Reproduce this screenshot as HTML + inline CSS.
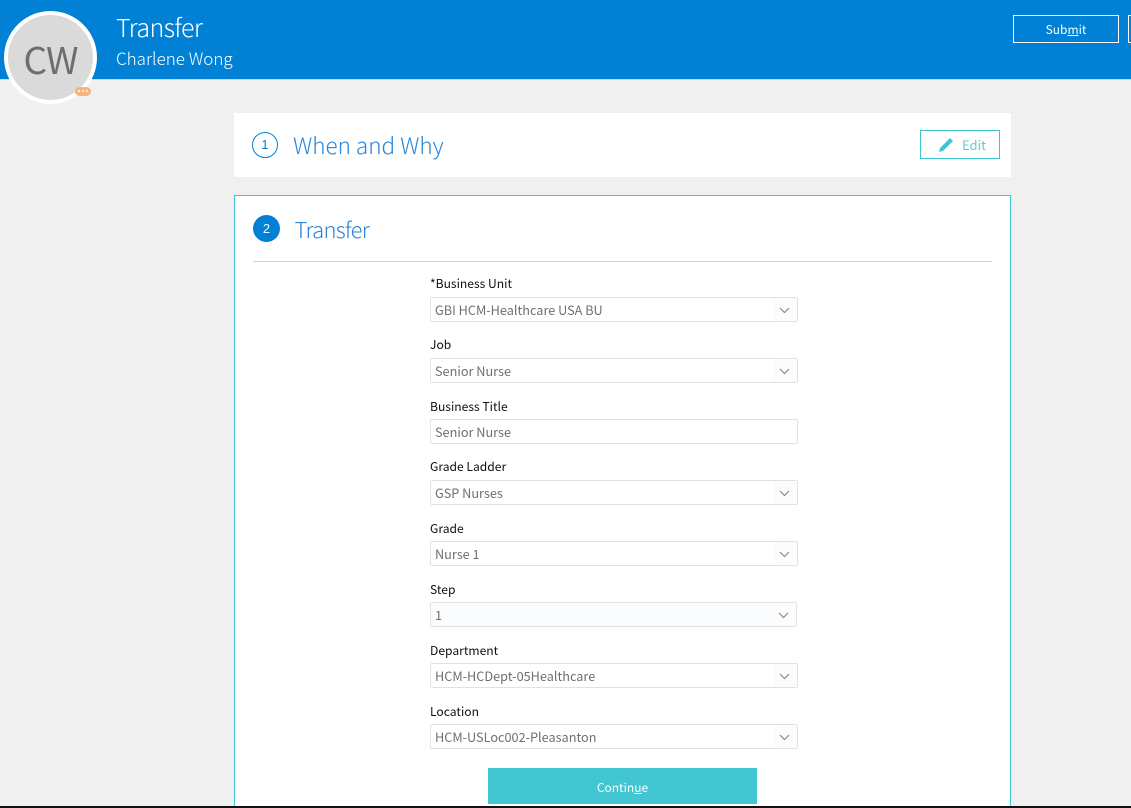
<!DOCTYPE html>
<html lang="en">
<head>
<meta charset="utf-8">
<title>Transfer</title>
<style>
*{box-sizing:border-box}
html,body{margin:0;padding:0;width:1131px;height:808px;overflow:hidden}
body{background:#f0f0f0;font-family:"Noto Sans CJK JP","Liberation Sans",sans-serif;}
#w{position:relative;width:1131px;height:808px;overflow:hidden}
.a{position:absolute;white-space:nowrap}
.lb{position:absolute;left:430px;font-size:12.1px;line-height:18px;color:#111;white-space:nowrap}
.f{position:absolute;left:430px;width:368px;height:25px;background:#fff;border:1px solid #dfe3e6;border-radius:2px;font-size:12.7px;line-height:24px;color:#6f6f6f;padding-left:4px;white-space:nowrap}
.f.s::after{content:"";position:absolute;right:0;top:0;bottom:0;width:23px;background:#fbfcfd}
.f svg{position:absolute;right:7px;top:9px;z-index:1}
</style>
</head>
<body>
<div id="w">
<div class="a" style="left:0;top:0;width:1131px;height:80px;background:#0081d6;border-bottom:1px solid #c5d9e8"></div>
<div class="a" style="left:4px;top:11px;width:93px;height:93px;border-radius:50%;background:#dadada;border:4px solid #fff"></div>
<div class="a" style="left:4px;top:36px;width:93px;text-align:center;font-size:37px;line-height:44px;color:#6e6e6e;font-weight:400;letter-spacing:-1px">CW</div>
<div class="a" style="left:75px;top:87px;width:16px;height:9px;border-radius:5px;background:#f9b47c"></div>
<div class="a" style="left:78px;top:90px;width:2px;height:2px;background:#fff;box-shadow:4px 0 0 #fff,8px 0 0 #fff;border-radius:50%"></div>
<div class="a" style="left:116px;top:9px;font-size:25px;line-height:36px;color:#fff;font-weight:300;letter-spacing:-.6px">Transfer</div>
<div class="a" style="left:116px;top:45px;font-size:17px;line-height:26px;color:#fff;font-weight:300">Charlene Wong</div>
<div class="a" style="left:1013px;top:15px;width:106px;height:28px;border:1px solid #fff;color:#fff;font-size:12px;line-height:27px;text-align:center">Sub<u>m</u>it</div>
<div class="a" style="left:1128px;top:15px;width:10px;height:28px;border:1px solid #fff"></div>

<div class="a" style="left:234px;top:113px;width:777px;height:64px;background:#fff"></div>
<div class="a" style="left:252px;top:132px;width:26px;height:26px;border:1px solid #0081d6;border-radius:50%;color:#0081d6;font-size:13px;line-height:24px;text-align:center;font-family:'Liberation Sans',sans-serif">1</div>
<div class="a" style="left:293px;top:128px;font-size:22.5px;line-height:34px;color:#2a86d8;font-weight:300">When and Why</div>
<div class="a" style="left:920px;top:130px;width:80px;height:29px;border:1px solid #40c6d2"></div>
<svg class="a" style="left:938px;top:137px" width="16" height="16" viewBox="0 0 16 16"><path d="M1 15 L2 11 L11 2 L12 1 L15 4 L14 5 L5 14 Z" fill="#40c6d2"/></svg>
<div class="a" style="left:962px;top:136px;font-size:13px;line-height:18px;color:#5ccdd7">Edit</div>

<div class="a" style="left:234px;top:195px;width:777px;height:620px;background:#fff;border:1px solid #40c6d2"></div>
<div class="a" style="left:253px;top:215px;width:27px;height:27px;border-radius:50%;background:#0081d6;color:#fff;font-size:13px;line-height:27px;text-align:center;font-family:'Liberation Sans',sans-serif">2</div>
<div class="a" style="left:294.5px;top:212px;font-size:22px;line-height:34px;color:#2a86d8;font-weight:300;letter-spacing:-.7px">Transfer</div>
<div class="a" style="left:253px;top:261px;width:739px;height:1px;background:#cfd4d6"></div>

<div class="lb" style="top:275px">*Business Unit</div>
<div class="f s" style="top:297px">GBI HCM-Healthcare USA BU<svg width="11" height="7" viewBox="0 0 11 7"><path d="M1 1 L5.5 5.5 L10 1" fill="none" stroke="#8b8b8b" stroke-width="1.2"/></svg></div>
<div class="lb" style="top:336px">Job</div>
<div class="f s" style="top:358px">Senior Nurse<svg width="11" height="7" viewBox="0 0 11 7"><path d="M1 1 L5.5 5.5 L10 1" fill="none" stroke="#8b8b8b" stroke-width="1.2"/></svg></div>
<div class="lb" style="top:398px">Business Title</div>
<div class="f" style="top:419px">Senior Nurse</div>
<div class="lb" style="top:458px">Grade Ladder</div>
<div class="f s" style="top:480px">GSP Nurses<svg width="11" height="7" viewBox="0 0 11 7"><path d="M1 1 L5.5 5.5 L10 1" fill="none" stroke="#8b8b8b" stroke-width="1.2"/></svg></div>
<div class="lb" style="top:520px">Grade</div>
<div class="f s" style="top:541px">Nurse 1<svg width="11" height="7" viewBox="0 0 11 7"><path d="M1 1 L5.5 5.5 L10 1" fill="none" stroke="#8b8b8b" stroke-width="1.2"/></svg></div>
<div class="lb" style="top:581px">Step</div>
<div class="f s" style="top:602px;width:367px;background:#fbfcfd">1<svg width="11" height="7" viewBox="0 0 11 7"><path d="M1 1 L5.5 5.5 L10 1" fill="none" stroke="#8b8b8b" stroke-width="1.2"/></svg></div>
<div class="lb" style="top:642px">Department</div>
<div class="f s" style="top:663px">HCM-HCDept-05Healthcare<svg width="11" height="7" viewBox="0 0 11 7"><path d="M1 1 L5.5 5.5 L10 1" fill="none" stroke="#8b8b8b" stroke-width="1.2"/></svg></div>
<div class="lb" style="top:703px">Location</div>
<div class="f s" style="top:724px">HCM-USLoc002-Pleasanton<svg width="11" height="7" viewBox="0 0 11 7"><path d="M1 1 L5.5 5.5 L10 1" fill="none" stroke="#8b8b8b" stroke-width="1.2"/></svg></div>

<div class="a" style="left:488px;top:768px;width:269px;height:36px;background:#41c6d2;color:#fff;font-size:12px;line-height:39px;text-align:center">Contin<u>u</u>e</div>
<div class="a" style="left:0;top:806px;width:1131px;height:2px;background:#111"></div>
</div>
</body>
</html>
